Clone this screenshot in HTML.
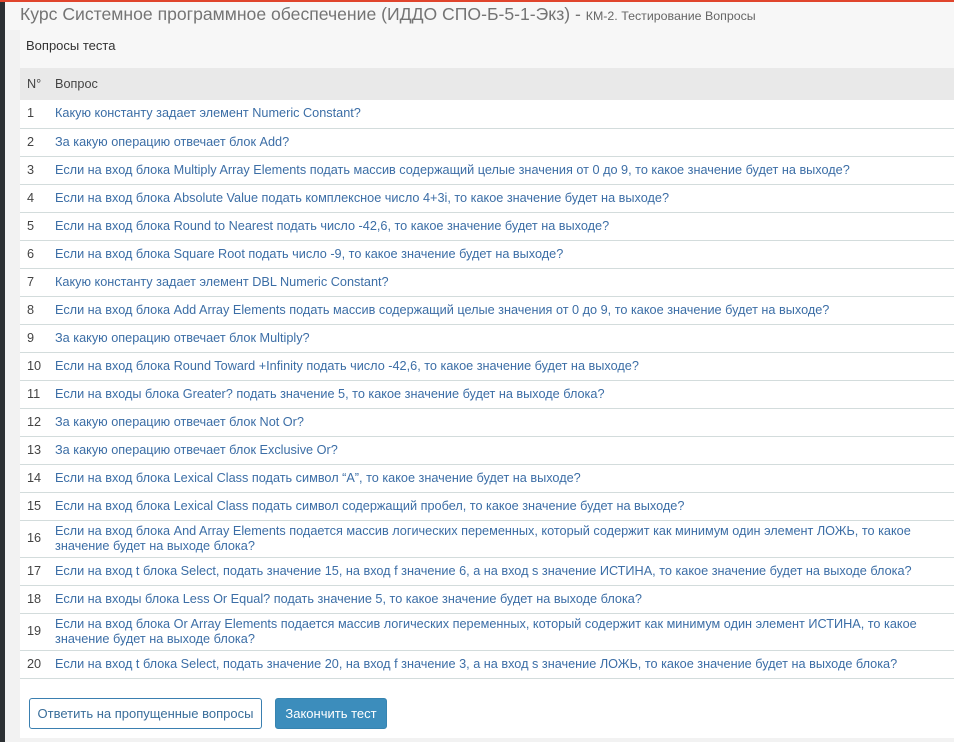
<!DOCTYPE html>
<html><head><meta charset="utf-8"><style>
*{margin:0;padding:0;box-sizing:border-box}
body{width:954px;height:742px;overflow:hidden;background:#f2f2f2;font-family:"Liberation Sans",sans-serif;position:relative}
.dark{position:absolute;left:0;top:0;width:5px;height:742px;background:#2c3034}
.red{position:absolute;left:0;top:0;width:954px;height:2px;background:#e0452d}
.title{position:absolute;left:5px;top:2px;width:949px;height:28px;background:#f7f7f7;padding-left:15px;color:#747474;font-size:17.6px;line-height:24px;white-space:nowrap}
.title small{font-size:12.4px;color:#666}
.panel{position:absolute;left:5px;top:30px;width:949px;height:712px;background:#f2f2f2}
.inner{position:absolute;left:15px;top:0;width:934px;height:708px;background:#fff}
.head{position:absolute;left:15px;top:0;width:934px;height:38px;background:#f7f7f7;font-size:13px;color:#333;padding:8px 0 0 6px}
table{position:absolute;left:15px;top:38px;width:934px;border-collapse:collapse;font-size:12.7px}
th{background:#e9e9e9;height:32px;text-align:left;font-weight:normal;color:#444}
td{border-bottom:1px solid #d3dcdc;height:28px;line-height:15px;vertical-align:middle}
td.n,th.n{width:35px;padding-left:7px;color:#444}
td.q{color:#3c6ea6;padding-right:30px}
tr.t td{height:37px}
.b{position:absolute;top:698px;height:31px;border-radius:3px;font-size:13px;line-height:29px;text-align:center}
.b1{left:29px;width:233px;border:1px solid #3a7fb0;color:#3a6e9a;background:#fff}
.b2{left:275px;width:112px;background:#3c8dbc;color:#fff;border:1px solid #3784b0}
</style></head><body>
<div class="dark"></div><div class="red"></div>
<div class="title">Курс Системное программное обеспечение (ИДДО СПО-Б-5-1-Экз) - <small>КМ-2. Тестирование Вопросы</small></div>
<div class="panel"><div class="inner"></div><div class="head">Вопросы теста</div>
<table>
<tr><th class="n">N°</th><th>Вопрос</th></tr>
<tr><td class="n">1</td><td class="q">Какую константу задает элемент Numeric Constant?</td></tr>
<tr><td class="n">2</td><td class="q">За какую операцию отвечает блок Add?</td></tr>
<tr><td class="n">3</td><td class="q">Если на вход блока Multiply Array Elements подать массив содержащий целые значения от 0 до 9, то какое значение будет на выходе?</td></tr>
<tr><td class="n">4</td><td class="q">Если на вход блока Absolute Value подать комплексное число 4+3i, то какое значение будет на выходе?</td></tr>
<tr><td class="n">5</td><td class="q">Если на вход блока Round to Nearest подать число -42,6, то какое значение будет на выходе?</td></tr>
<tr><td class="n">6</td><td class="q">Если на вход блока Square Root подать число -9, то какое значение будет на выходе?</td></tr>
<tr><td class="n">7</td><td class="q">Какую константу задает элемент DBL Numeric Constant?</td></tr>
<tr><td class="n">8</td><td class="q">Если на вход блока Add Array Elements подать массив содержащий целые значения от 0 до 9, то какое значение будет на выходе?</td></tr>
<tr><td class="n">9</td><td class="q">За какую операцию отвечает блок Multiply?</td></tr>
<tr><td class="n">10</td><td class="q">Если на вход блока Round Toward +Infinity подать число -42,6, то какое значение будет на выходе?</td></tr>
<tr><td class="n">11</td><td class="q">Если на входы блока Greater? подать значение 5, то какое значение будет на выходе блока?</td></tr>
<tr><td class="n">12</td><td class="q">За какую операцию отвечает блок Not Or?</td></tr>
<tr><td class="n">13</td><td class="q">За какую операцию отвечает блок Exclusive Or?</td></tr>
<tr><td class="n">14</td><td class="q">Если на вход блока Lexical Class подать символ “A”, то какое значение будет на выходе?</td></tr>
<tr><td class="n">15</td><td class="q">Если на вход блока Lexical Class подать символ содержащий пробел, то какое значение будет на выходе?</td></tr>
<tr class="t"><td class="n">16</td><td class="q">Если на вход блока And Array Elements подается массив логических переменных, который содержит как минимум один элемент ЛОЖЬ, то какое значение будет на выходе блока?</td></tr>
<tr><td class="n">17</td><td class="q">Если на вход t блока Select, подать значение 15, на вход f значение 6, а на вход s значение ИСТИНА, то какое значение будет на выходе блока?</td></tr>
<tr><td class="n">18</td><td class="q">Если на входы блока Less Or Equal? подать значение 5, то какое значение будет на выходе блока?</td></tr>
<tr class="t"><td class="n">19</td><td class="q">Если на вход блока Or Array Elements подается массив логических переменных, который содержит как минимум один элемент ИСТИНА, то какое значение будет на выходе блока?</td></tr>
<tr><td class="n">20</td><td class="q">Если на вход t блока Select, подать значение 20, на вход f значение 3, а на вход s значение ЛОЖЬ, то какое значение будет на выходе блока?</td></tr>
</table></div>
<div class="b b1">Ответить на пропущенные вопросы</div>
<div class="b b2">Закончить тест</div>
</body></html>
